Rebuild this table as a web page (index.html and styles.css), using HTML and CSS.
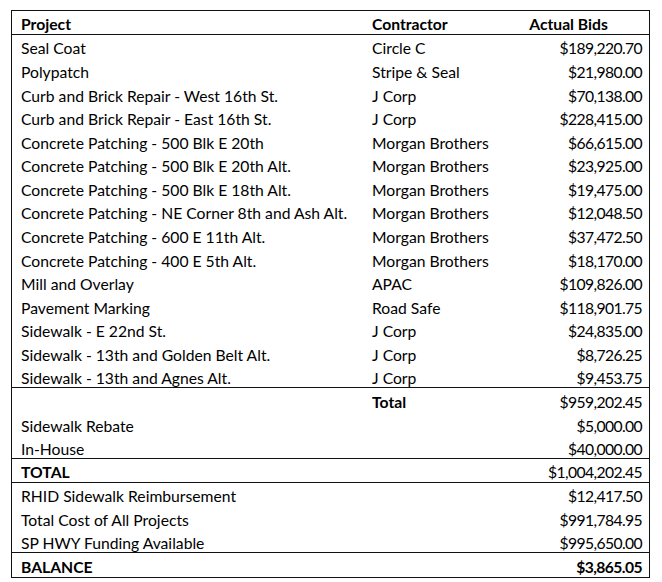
FILE: index.html
```html
<!DOCTYPE html>
<html>
<head>
<meta charset="utf-8">
<link rel="stylesheet" href="styles.css">
</head>
<body>
<div class="sheet">
  <div class="row head line">
    <div class="c1">Project</div><div class="c2">Contractor</div><div class="c3 center">Actual Bids</div>
  </div>
  <div class="row"><div class="c1">Seal Coat</div><div class="c2">Circle C</div><div class="c3">$189,220.70</div></div>
  <div class="row"><div class="c1">Polypatch</div><div class="c2">Stripe &amp; Seal</div><div class="c3">$21,980.00</div></div>
  <div class="row"><div class="c1">Curb and Brick Repair - West 16th St.</div><div class="c2">J Corp</div><div class="c3">$70,138.00</div></div>
  <div class="row"><div class="c1">Curb and Brick Repair - East 16th St.</div><div class="c2">J Corp</div><div class="c3">$228,415.00</div></div>
  <div class="row"><div class="c1">Concrete Patching - 500 Blk E 20th</div><div class="c2">Morgan Brothers</div><div class="c3">$66,615.00</div></div>
  <div class="row"><div class="c1">Concrete Patching - 500 Blk E 20th Alt.</div><div class="c2">Morgan Brothers</div><div class="c3">$23,925.00</div></div>
  <div class="row"><div class="c1">Concrete Patching - 500 Blk E 18th Alt.</div><div class="c2">Morgan Brothers</div><div class="c3">$19,475.00</div></div>
  <div class="row"><div class="c1">Concrete Patching - NE Corner 8th and Ash Alt.</div><div class="c2">Morgan Brothers</div><div class="c3">$12,048.50</div></div>
  <div class="row"><div class="c1">Concrete Patching - 600 E 11th Alt.</div><div class="c2">Morgan Brothers</div><div class="c3">$37,472.50</div></div>
  <div class="row"><div class="c1">Concrete Patching - 400 E 5th Alt.</div><div class="c2">Morgan Brothers</div><div class="c3">$18,170.00</div></div>
  <div class="row"><div class="c1">Mill and Overlay</div><div class="c2">APAC</div><div class="c3">$109,826.00</div></div>
  <div class="row"><div class="c1">Pavement Marking</div><div class="c2">Road Safe</div><div class="c3">$118,901.75</div></div>
  <div class="row"><div class="c1">Sidewalk - E 22nd St.</div><div class="c2">J Corp</div><div class="c3">$24,835.00</div></div>
  <div class="row"><div class="c1">Sidewalk - 13th and Golden Belt Alt.</div><div class="c2">J Corp</div><div class="c3">$8,726.25</div></div>
  <div class="row line"><div class="c1">Sidewalk - 13th and Agnes Alt.</div><div class="c2">J Corp</div><div class="c3">$9,453.75</div></div>
  <div class="row"><div class="c1"></div><div class="c2 bold">Total</div><div class="c3">$959,202.45</div></div>
  <div class="row"><div class="c1">Sidewalk Rebate</div><div class="c2"></div><div class="c3">$5,000.00</div></div>
  <div class="row line"><div class="c1">In-House</div><div class="c2"></div><div class="c3">$40,000.00</div></div>
  <div class="row line"><div class="c1 bold">TOTAL</div><div class="c2"></div><div class="c3">$1,004,202.45</div></div>
  <div class="row"><div class="c1">RHID Sidewalk Reimbursement</div><div class="c2"></div><div class="c3">$12,417.50</div></div>
  <div class="row"><div class="c1">Total Cost of All Projects</div><div class="c2"></div><div class="c3">$991,784.95</div></div>
  <div class="row line"><div class="c1">SP HWY Funding Available</div><div class="c2"></div><div class="c3">$995,650.00</div></div>
  <div class="row"><div class="c1 bold">BALANCE</div><div class="c2"></div><div class="c3 bold">$3,865.05</div></div>
</div>
</body>
</html>
```
FILE: styles.css
```css
html, body {
  margin: 0;
  padding: 0;
  background: #fff;
}
body {
  padding: 10px 0 0 11px;
  font-family: Lato, "Liberation Sans", sans-serif;
  font-size: 15.7px;
  color: #000;
}
.sheet {
  box-sizing: border-box;
  width: 639px;
  height: 568px;
  border: 1px solid #111;
  display: grid;
  grid-template-rows: repeat(24, 1fr);
}
.row {
  display: grid;
  grid-template-columns: 360px 123px 1fr;
  align-items: center;
  box-sizing: border-box;
  padding-top: 4px;
}
.row.line {
  border-bottom: 1px solid #111;
}
.c1 {
  padding-left: 9px;
  white-space: nowrap;
}
.c2 {
  white-space: nowrap;
}
.c3 {
  text-align: right;
  padding-right: 7px;
  white-space: nowrap;
  letter-spacing: -0.6px;
}
.c3.center {
  text-align: center;
  letter-spacing: 0;
}
.head div, .bold {
  font-weight: 700;
}
```
